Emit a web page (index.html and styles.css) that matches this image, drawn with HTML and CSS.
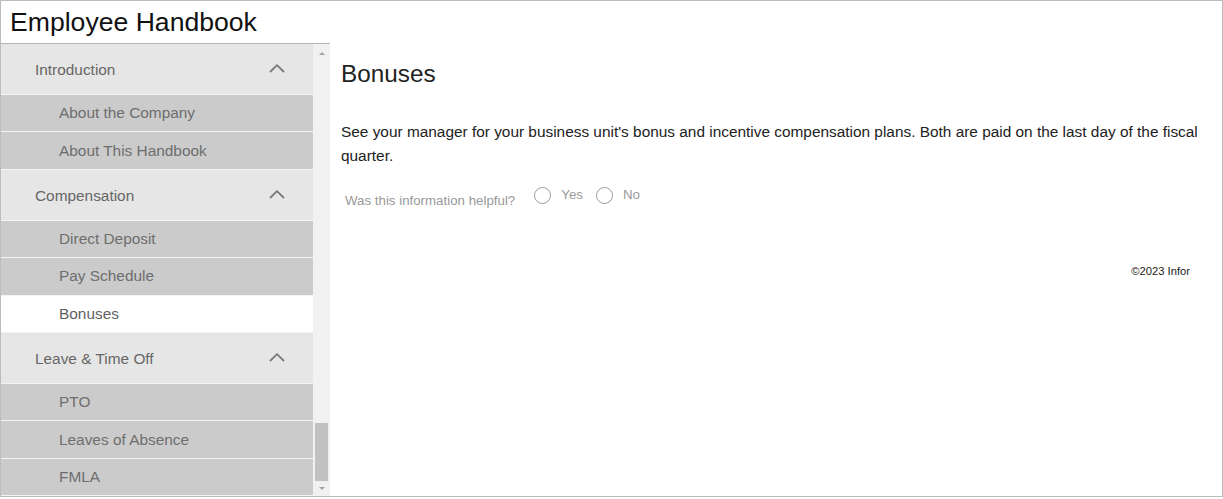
FILE: index.html
```html
<!DOCTYPE html>
<html lang="en">
<head>
<meta charset="utf-8">
<title>Employee Handbook</title>
<link rel="stylesheet" href="styles.css">
</head>
<body>
<div class="app">
  <div class="title">Employee Handbook</div>
  <div class="body">
    <div class="sidebar">
      <nav class="nav">
        <div class="group">
          <div class="group-head"><span>Introduction</span><svg class="chev" viewBox="0 0 16 9" width="16" height="9"><polyline points="1,8 8,1.2 15,8"/></svg></div>
          <div class="item">About the Company</div>
          <div class="item">About This Handbook</div>
        </div>
        <div class="group">
          <div class="group-head"><span>Compensation</span><svg class="chev" viewBox="0 0 16 9" width="16" height="9"><polyline points="1,8 8,1.2 15,8"/></svg></div>
          <div class="item">Direct Deposit</div>
          <div class="item">Pay Schedule</div>
          <div class="item active">Bonuses</div>
        </div>
        <div class="group">
          <div class="group-head"><span>Leave &amp; Time Off</span><svg class="chev" viewBox="0 0 16 9" width="16" height="9"><polyline points="1,8 8,1.2 15,8"/></svg></div>
          <div class="item">PTO</div>
          <div class="item">Leaves of Absence</div>
          <div class="item">FMLA</div>
        </div>
      </nav>
      <div class="scrollbar">
        <div class="sb-btn"><span class="tri-up"></span></div>
        <div class="sb-track"><div class="sb-thumb"></div></div>
        <div class="sb-btn sb-btn-down"><span class="tri-down"></span></div>
      </div>
    </div>
    <main class="main">
      <h1 class="heading">Bonuses</h1>
      <p class="text">See your manager for your business unit's bonus and incentive compensation plans. Both are paid on the last day of the fiscal quarter.</p>
      <div class="feedback">
        <span class="fb-label">Was this information helpful?</span>
        <span class="radio"></span><span class="opt">Yes</span>
        <span class="radio"></span><span class="opt">No</span>
      </div>
      <div class="footer">©2023 Infor</div>
    </main>
  </div>
</div>
</body>
</html>
```
FILE: styles.css
```css
html, body {
  margin: 0;
  padding: 0;
  background: #ffffff;
}
body {
  font-family: "Liberation Sans", Arial, sans-serif;
}
.app {
  width: 1223px;
  height: 497px;
  box-sizing: border-box;
  border: 1px solid #bcbcbc;
  display: flex;
  flex-direction: column;
  overflow: hidden;
}
.title {
  height: 42px;
  line-height: 42px;
  padding-left: 9px;
  font-size: 26.6px;
  color: #111111;
  flex: none;
}
.body {
  flex: 1;
  display: flex;
  min-height: 0;
}
.sidebar {
  width: 329px;
  flex: none;
  display: flex;
  border-top: 1px solid #b4b4b4;
  overflow: hidden;
}
.nav {
  width: 312px;
  flex: none;
  overflow: hidden;
}
.group-head {
  height: 51px;
  box-sizing: border-box;
  border-bottom: 1px solid #f3f3f3;
  background: #e6e6e6;
  display: flex;
  align-items: center;
  justify-content: space-between;
  padding: 2px 28px 0 34px;
  font-size: 15.4px;
  color: #666666;
}
.chev {
  display: block;
  margin-top: -3px;
}
.chev polyline {
  fill: none;
  stroke: #7a7a7a;
  stroke-width: 1.8;
}
.item {
  height: 37.4px;
  box-sizing: border-box;
  border-bottom: 1px solid #f3f3f3;
  background: #cbcbcb;
  display: flex;
  align-items: center;
  padding-left: 58px;
  font-size: 15.4px;
  color: #6e6e6e;
}
.item.active {
  background: #ffffff;
  color: #5f5f5f;
}
.scrollbar {
  width: 17px;
  flex: none;
  background: #f1f1f1;
  display: flex;
  flex-direction: column;
}
.sb-btn {
  height: 17px;
  flex: none;
  display: flex;
  align-items: center;
  justify-content: center;
}
.sb-btn-down {
  height: 15px;
}
.tri-up {
  width: 0;
  height: 0;
  border-left: 3px solid transparent;
  border-right: 3px solid transparent;
  border-bottom: 3px solid #a3a3a3;
  margin-top: 1px;
}
.tri-down {
  width: 0;
  height: 0;
  border-left: 3.5px solid transparent;
  border-right: 3.5px solid transparent;
  border-top: 3.5px solid #a3a3a3;
}
.sb-track {
  flex: 1;
  display: flex;
  flex-direction: column;
  justify-content: flex-end;
  padding: 0 2px;
}
.sb-thumb {
  height: 58px;
  background: #c1c1c1;
}
.main {
  flex: 1;
  min-width: 0;
  padding: 17px 12px 0 11px;
  color: #222222;
}
.heading {
  margin: 0;
  font-size: 24.3px;
  line-height: 28px;
  font-weight: normal;
  color: #222222;
}
.text {
  margin: 32px 0 0 0;
  font-size: 15.4px;
  line-height: 24px;
  color: #222222;
}
.feedback {
  margin-top: 18px;
  display: flex;
  align-items: flex-start;
  padding-left: 4px;
  color: #999999;
  font-size: 13.3px;
  line-height: 17px;
}
.fb-label {
  margin-top: 6px;
  margin-right: 19px;
}
.radio {
  width: 17px;
  height: 17px;
  box-sizing: border-box;
  border: 1px solid #9a9a9a;
  border-radius: 50%;
  margin-right: 10px;
  margin-top: 1px;
}
.opt {
  margin-right: 13px;
}
.footer {
  margin-top: 56px;
  margin-right: 20px;
  text-align: right;
  font-size: 11.2px;
  line-height: 13px;
  color: #1a1a1a;
}
```
